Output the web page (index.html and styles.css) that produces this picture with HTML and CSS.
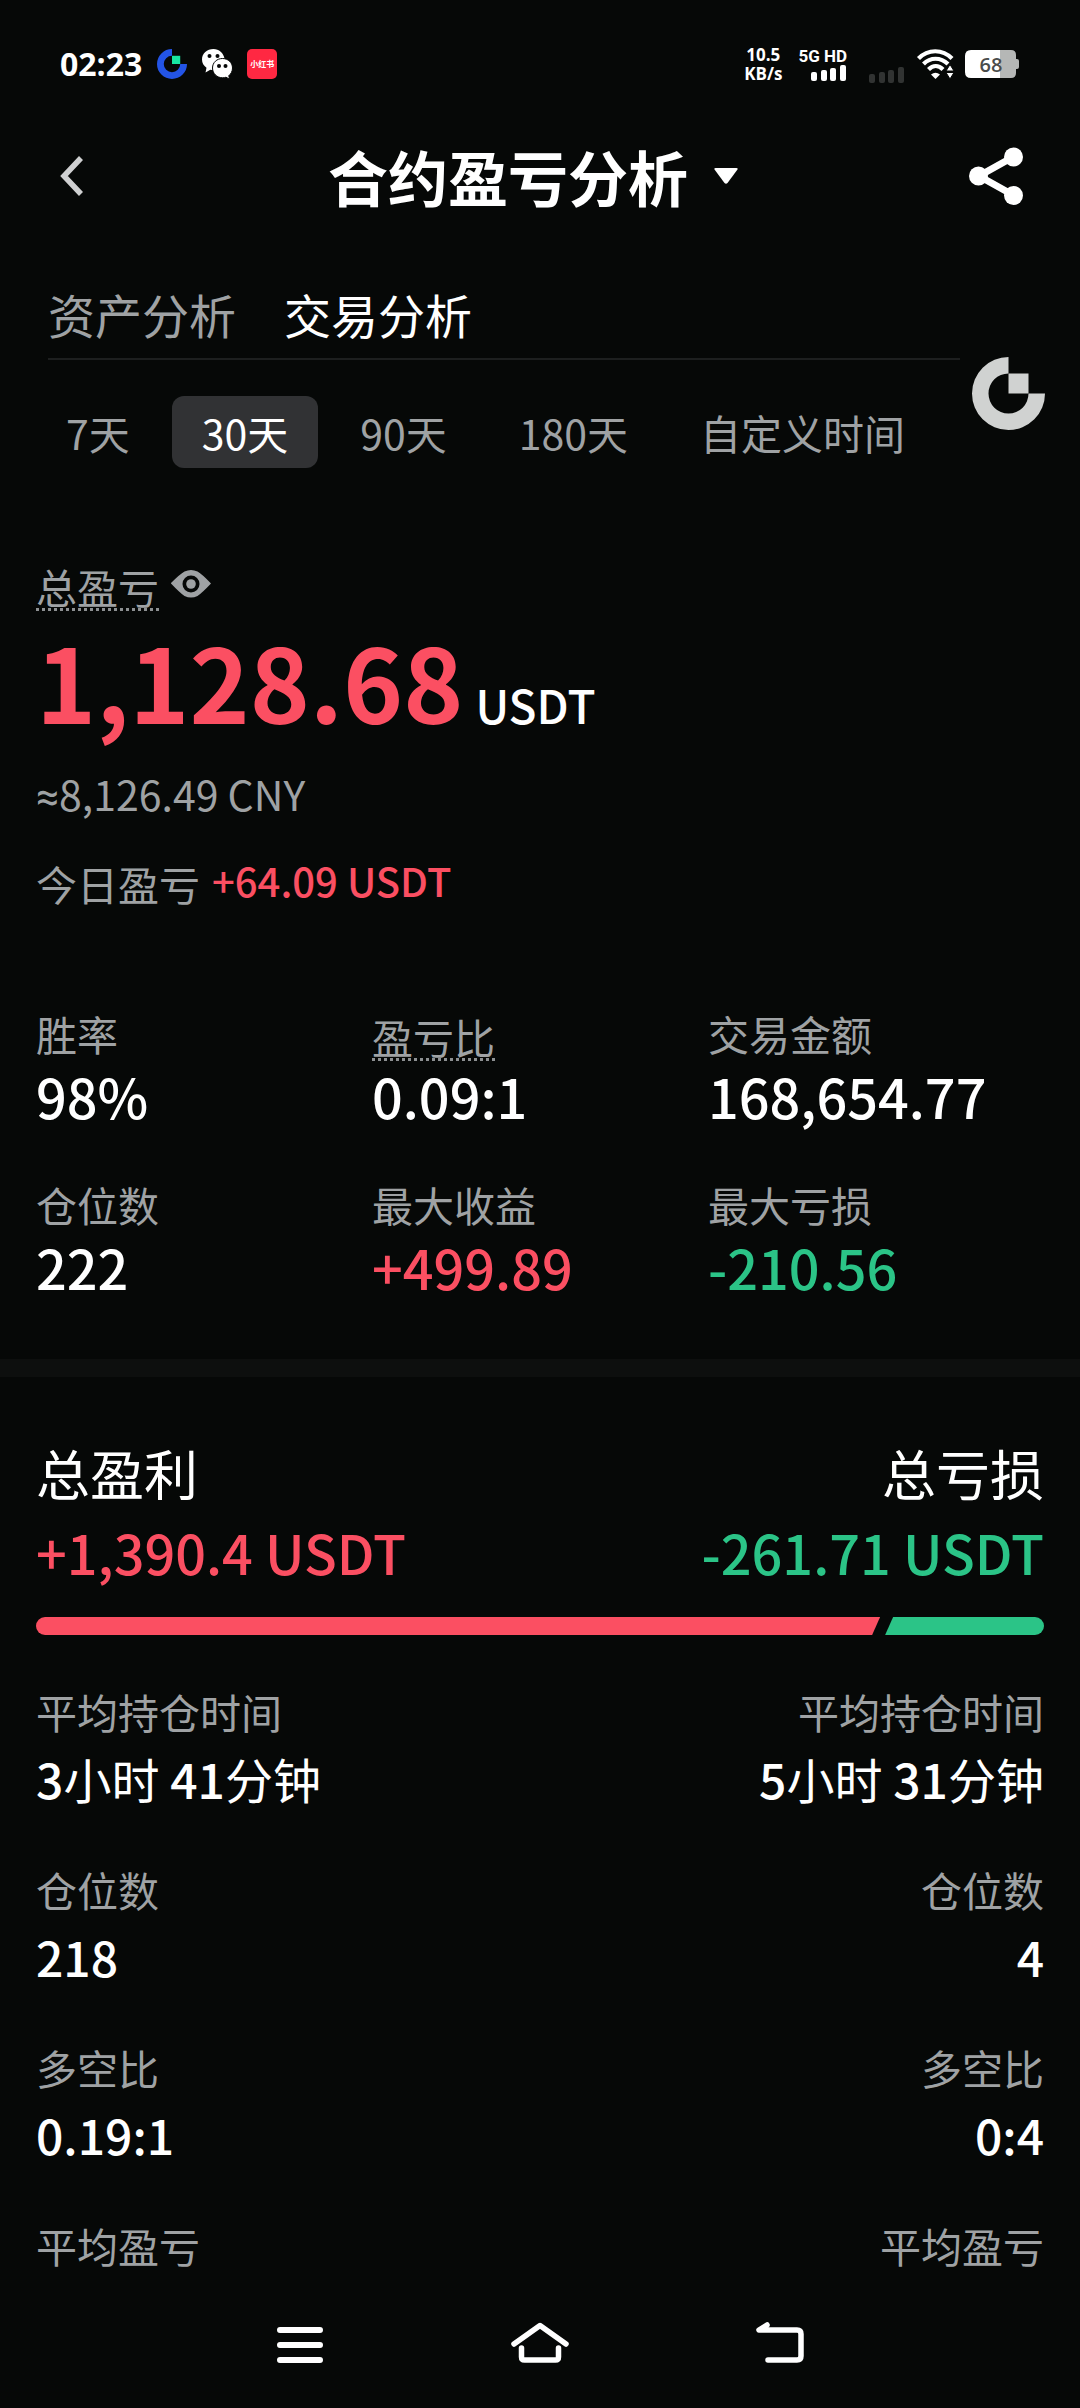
FILE: index.html
```html
<!DOCTYPE html>
<html lang="zh-CN">
<head>
<meta charset="utf-8">
<meta name="viewport" content="width=device-width, initial-scale=1">
<title>合约盈亏分析</title>
<link rel="stylesheet" href="styles.css">
</head>
<body>
<div class="screen">
  <div class="status">
    <div class="status-left">
      <span class="clock">02:23</span>
      <svg width="30" height="30" viewBox="0 0 73 73" aria-hidden="true"><path fill="#2354e6" d="M36.500 0A36.500 36.500 0 1 0 73 36.500H56.500A20 20 0 1 1 36.500 16.500Z"/><path fill="#17e6a1" d="M36.500 16.500h20v20h-20z"/></svg>
      <svg width="30" height="30" viewBox="0 0 30 30" aria-hidden="true">
        <path fill="#fff" d="M11.500 0C5 0 0 4.500 0 10.500c0 3.500 1.700 6.200 4.500 8.200L3.500 23.500l4.800-2.800c1 .3 2 .4 3.200.4A11 11 0 0 1 22.500 9.500C21.500 4 17 0 11.500 0Z"/>
        <circle cx="7.500" cy="7" r="2" fill="#060807"/><circle cx="15.500" cy="7" r="2" fill="#060807"/>
        <path fill="#fff" stroke="#060807" stroke-width="1" d="M20.500 9.500c-5.500 0-10 4-10 9.500s4.500 9.800 10 9.800c1.300 0 2.500-.2 3.500-.6l3.500 2-.7-3.500c2.200-1.800 3.700-4.400 3.700-7.700 0-5.500-4.500-9.500-10-9.500Z"/>
        <circle cx="17" cy="17" r="2" fill="#060807"/><circle cx="23.500" cy="17" r="2" fill="#060807"/>
      </svg>
      <span class="app-badge">小红书</span>
    </div>
    <div class="status-right">
      <span class="speed"><span>10.5</span><span>KB/s</span></span>
      <span class="network">5G HD
        <svg width="36" height="16" viewBox="0 0 36 16" fill="#fff" aria-hidden="true"><rect y="7" width="6" height="9" rx="2"/><rect x="10" y="5" width="6" height="11" rx="2"/><rect x="19" y="3" width="6" height="13" rx="2"/><rect x="29" width="6" height="16" rx="2"/></svg>
      </span>
      <svg class="signal-off" width="36" height="16" viewBox="0 0 36 16" fill="#313332" aria-hidden="true"><rect y="7" width="6" height="9" rx="2"/><rect x="10" y="5" width="6" height="11" rx="2"/><rect x="19" y="3" width="6" height="13" rx="2"/><rect x="29" width="6" height="16" rx="2"/></svg>
      <svg class="wifi" width="38" height="30" viewBox="0 0 38 30" aria-hidden="true">
        <g fill="none" stroke="#fff" stroke-width="4.200"><path d="M1.500 9.500C11-.2 25.500-.2 35 9.500"/><path d="M6.500 15C13.500 8 23.500 8 31 15"/><path d="M11.500 20.500C16 16 21.500 16 26 20.500"/></g>
        <path fill="#fff" d="M14 25.500q4.500-3.500 9 0L18.500 30Z"/><path fill="#fff" stroke="#060807" d="M33 15.500l4 6.500h-8ZM33 30l4-6.500h-8Z"/>
      </svg>
      <svg width="55" height="28" viewBox="0 0 55 28" role="img" aria-label="68%">
        <path fill="#b5b7b6" d="M35 0h11q5 0 5 5v4h1q2 0 2 2v6q0 2-2 2h-1v4q0 5-5 5H35Z"/><path fill="#fff" d="M6 0h29v28H6q-6 0-6-6V6q0-6 6-6Z"/>
        <text x="26" y="22" text-anchor="middle" class="battery-text">68</text>
      </svg>
    </div>
  </div>

  <header class="header">
    <button class="icon-btn back" aria-label="返回"><svg width="26" height="42" viewBox="0 0 26 42" aria-hidden="true"><path d="M22 3L5 21l17 18" fill="none" stroke="#cfd0d1" stroke-width="5.500"/></svg></button>
    <h1 class="title"><button class="title-btn">合约盈亏分析<svg width="24" height="16" viewBox="0 0 24 16" aria-hidden="true"><path fill="#fff" d="M1.500 0h21q2 0 .8 1.800L13.500 15q-1.500 1.500-3 0L.7 1.800Q-.5 0 1.500 0Z"/></svg></button></h1>
    <button class="icon-btn share" aria-label="分享"><svg width="54" height="58" viewBox="0 0 54 58" aria-hidden="true"><path d="M44 10L10 29l34 19" fill="none" stroke="#fff" stroke-width="7"/><g fill="#fff"><circle cx="44.500" cy="10" r="9.500"/><circle cx="9.500" cy="29" r="9.500"/><circle cx="44.500" cy="48.500" r="9.500"/></g></svg></button>
  </header>

  <nav class="tabs">
    <a class="tab" href="#assets">资产分析</a>
    <a class="tab active" href="#trades" aria-current="page">交易分析</a>
    <button class="float-logo" aria-label="悬浮菜单"><svg width="73" height="73" viewBox="0 0 73 73" fill="#d0d2d1" aria-hidden="true"><path d="M36.500 0A36.500 36.500 0 1 0 73 36.500H56.500A20 20 0 1 1 36.500 16.500Z"/><path d="M36.500 16.500h20v20h-20z"/></svg></button>
  </nav>

  <div class="ranges">
    <button class="range">7天</button>
    <button class="range active">30天</button>
    <button class="range">90天</button>
    <button class="range">180天</button>
    <button class="range">自定义时间</button>
  </div>

  <main class="content">
    <section class="summary">
      <div class="summary-head"><span class="label dotted">总盈亏</span><button class="icon-btn eye" aria-label="隐藏金额"><svg width="42" height="28" viewBox="0 0 42 28" aria-hidden="true"><path fill="#9fa2a4" fill-rule="evenodd" d="M1 13Q10 4 14.500 1.500Q21-1.500 27.500 1.500Q32 4 41 13.500Q32 23 27.500 26Q21 29 14.500 26Q10 23 1 13.500ZM21 5.500a8.500 8.500 0 1 0 0 17a8.500 8.500 0 1 0 0-17Z"/><circle cx="21" cy="14" r="4.800" fill="#9fa2a4"/></svg></button></div>
      <p class="total"><strong class="total-num">1,128.68</strong><span class="total-unit">USDT</span></p>
      <p class="approx"><span class="about">≈</span>8,126.49 CNY</p>
      <p class="today"><span class="label">今日盈亏</span><span class="today-num">+64.09 USDT</span></p>
    </section>

    <dl class="stats">
      <div><dt class="label">胜率</dt><dd class="stat-num">98%</dd></div>
      <div><dt class="label hint"><span class="dotted">盈亏比</span></dt><dd class="stat-num">0.09:1</dd></div>
      <div><dt class="label">交易金额</dt><dd class="stat-num">168,654.77</dd></div>
      <div><dt class="label">仓位数</dt><dd class="stat-num">222</dd></div>
      <div><dt class="label">最大收益</dt><dd class="stat-num up">+499.89</dd></div>
      <div><dt class="label">最大亏损</dt><dd class="stat-num down">-210.56</dd></div>
    </dl>
  </main>

  <section class="compare">
    <div class="pair">
      <h2 class="side-title">总盈利</h2><h2 class="side-title">总亏损</h2>
    </div>
    <div class="pair side-nums">
      <span class="up">+1,390.4 USDT</span><span class="down">-261.71 USDT</span>
    </div>
    <div class="bar"><div class="bar-win" style="flex-grow:1390.4"></div><div class="bar-loss" style="flex-grow:261.71"></div></div>
    <div class="rows">
      <dl class="col">
        <div><dt class="label">平均持仓时间</dt><dd class="row-num">3<span class="unit">小时</span> 41<span class="unit">分钟</span></dd></div>
        <div><dt class="label">仓位数</dt><dd class="row-num">218</dd></div>
        <div><dt class="label">多空比</dt><dd class="row-num">0.19:1</dd></div>
        <div><dt class="label">平均盈亏</dt></div>
      </dl>
      <dl class="col right">
        <div><dt class="label">平均持仓时间</dt><dd class="row-num">5<span class="unit">小时</span> 31<span class="unit">分钟</span></dd></div>
        <div><dt class="label">仓位数</dt><dd class="row-num">4</dd></div>
        <div><dt class="label">多空比</dt><dd class="row-num">0:4</dd></div>
        <div><dt class="label">平均盈亏</dt></div>
      </dl>
    </div>
  </section>

  <nav class="sysnav" aria-label="系统导航">
    <button class="icon-btn" aria-label="最近任务"><svg width="60" height="46" viewBox="0 0 60 46" fill="none" stroke="#fff" stroke-width="6" stroke-linecap="round" aria-hidden="true"><path d="M10 6h40M10 21h40M10 36h40"/></svg></button>
    <button class="icon-btn" aria-label="主页"><svg width="60" height="46" viewBox="0 0 60 46" fill="none" stroke="#fff" stroke-width="5.500" stroke-linecap="round" stroke-linejoin="round" aria-hidden="true"><path d="M4 20L30 1.500L56 20M11.500 24v9q0 3 3 3h31q3 0 3-3v-9"/></svg></button>
    <button class="icon-btn" aria-label="返回上一级"><svg width="60" height="46" viewBox="0 0 60 46" fill="none" stroke="#fff" stroke-width="5.500" stroke-linecap="round" stroke-linejoin="round" aria-hidden="true"><path d="M17 1L9 6h38q4 0 4 4v22q0 4-4 4H18"/></svg></button>
  </nav>
</div>
</body>
</html>
```

FILE: styles.css
```css
* { box-sizing: border-box; }

body {
  margin: 0;
  background: #060807;
  color: #fff;
  font-family: "Noto Sans CJK SC", sans-serif;
}

h1, h2, p, dl, dd { margin: 0; font-weight: 400; }

button {
  padding: 0;
  border: 0;
  background: none;
  color: inherit;
  font: inherit;
}

svg { display: block; overflow: visible; }

.screen {
  display: flex;
  flex-direction: column;
  min-height: 100vh;
}

.icon-btn { display: flex; }

/* system status bar */
.status {
  display: flex;
  justify-content: space-between;
  align-items: center;
  height: 128px;
  padding: 0 60px;
}

.status-left { display: flex; align-items: center; gap: 15px; }

.clock {
  font: 700 32px/36px "Open Sans", sans-serif;
}

.app-badge {
  width: 30px;
  border-radius: 5px;
  background: #ff2842;
  font-size: 8px;
  font-weight: 700;
  line-height: 30px;
  text-align: center;
}

.status-right { display: flex; align-items: center; }

.speed {
  display: flex;
  flex-direction: column;
  align-items: center;
  margin-right: 16px;
  font: 700 17px/19px "Open Sans", sans-serif;
}

.network {
  display: flex;
  flex-direction: column;
  align-items: flex-end;
  margin-right: 22px;
  font: 700 17px/18px Roboto, sans-serif;
}

.signal-off { align-self: flex-end; margin-right: 12px; }
.wifi { margin-right: 10px; }

.battery-text {
  font: 600 20px "Open Sans", sans-serif;
  fill: #4a4c4b;
}

/* page header */
.header {
  display: grid;
  grid-template-columns: 1fr auto 1fr;
  align-items: center;
  height: 96px;
  padding: 0 57px 0 59px;
}

.title { margin-right: 16px; font-size: 60px; line-height: 84px; }

.title-btn {
  display: flex;
  align-items: center;
  gap: 26px;
  font-weight: 700;
}

.share { justify-self: end; }

/* section tabs */
.tabs {
  position: relative;
  display: flex;
  gap: 48px;
  margin: 50px 120px 0 48px;
  padding-bottom: 4px;
  border-bottom: 2px solid #1d1f1f;
}

.tab {
  color: #9fa2a4;
  font-size: 47px;
  line-height: 80px;
  text-decoration: none;
}

.tab.active { color: #fff; }

.float-logo {
  position: absolute;
  right: -85px;
  bottom: -72px;
}

/* time ranges */
.ranges {
  display: flex;
  gap: 12px;
  margin-top: 36px;
  padding: 0 36px;
}

.range {
  padding: 0 30px;
  border-radius: 12px;
  color: #9fa2a4;
  font-size: 41px;
  line-height: 70px;
  height: 72px;
}

.range.active { background: #313234; color: #fff; }

.content { padding: 95px 36px 57px; border-bottom: 18px solid #0d0f0e; }

.label { color: #9fa2a4; font-size: 41px; line-height: 56px; }

.hint { display: flex; align-items: flex-end; height: 56px; }

.dotted {
  padding-bottom: 2px;
  background: repeating-linear-gradient(90deg, #8d9092 0 3px, transparent 3px 6px) left bottom / 100% 3px no-repeat;
  line-height: 46px;
}

.up { color: #fb4f62; }
.down { color: #2bc487; }

/* total profit */
.summary-head { display: flex; align-items: center; gap: 11px; }
.eye { margin-bottom: 6px; }

.total {
  display: flex;
  align-items: baseline;
  gap: 12px;
  margin-top: 9px;
}

.total-num { color: #fb4f62; font-size: 102px; font-weight: 700; line-height: 120px; }
.total-unit { font-size: 46px; font-weight: 500; line-height: 60px; }
.approx { margin-top: 21px; color: #9fa2a4; font-size: 41px; line-height: 64px; }
.about { font-family: Roboto, sans-serif; }
.today { display: flex; align-items: flex-start; gap: 12px; margin-top: 26px; }
.today-num { color: #fb4f62; font-size: 40px; font-weight: 500; line-height: 50px; }

/* statistics grid */
.stats {
  display: grid;
  grid-template-columns: repeat(3, 1fr);
  row-gap: 45px;
  margin-top: 94px;
}

.stat-num { font-size: 54px; font-weight: 500; line-height: 70px; }

/* profit against loss */
.compare { flex: 1; padding: 60px 36px 0; }
.pair { display: flex; justify-content: space-between; }
.side-title { font-size: 54px; line-height: 72px; }
.side-nums { font-size: 54px; font-weight: 500; line-height: 86px; }

.bar {
  display: flex;
  gap: 5px;
  height: 18px;
  margin-top: 22px;
  border-radius: 9px;
  overflow: hidden;
}

.bar-win {
  background: #fb4f62;
  clip-path: polygon(0 0, 100% 0, calc(100% - 8px) 100%, 0 100%);
}

.bar-loss {
  background: #2bc487;
  clip-path: polygon(8px 0, 100% 0, 100% 100%, 0 100%);
}

.rows { display: flex; justify-content: space-between; margin-top: 48px; }
.col { display: flex; flex-direction: column; gap: 44px; }
.right { text-align: right; }
.row-num { font-size: 48px; font-weight: 500; line-height: 78px; }
.unit { font-weight: 400; }

/* system navigation */
.sysnav {
  display: flex;
  justify-content: center;
  gap: 180px;
  padding: 30px 0 38px;
}
```
